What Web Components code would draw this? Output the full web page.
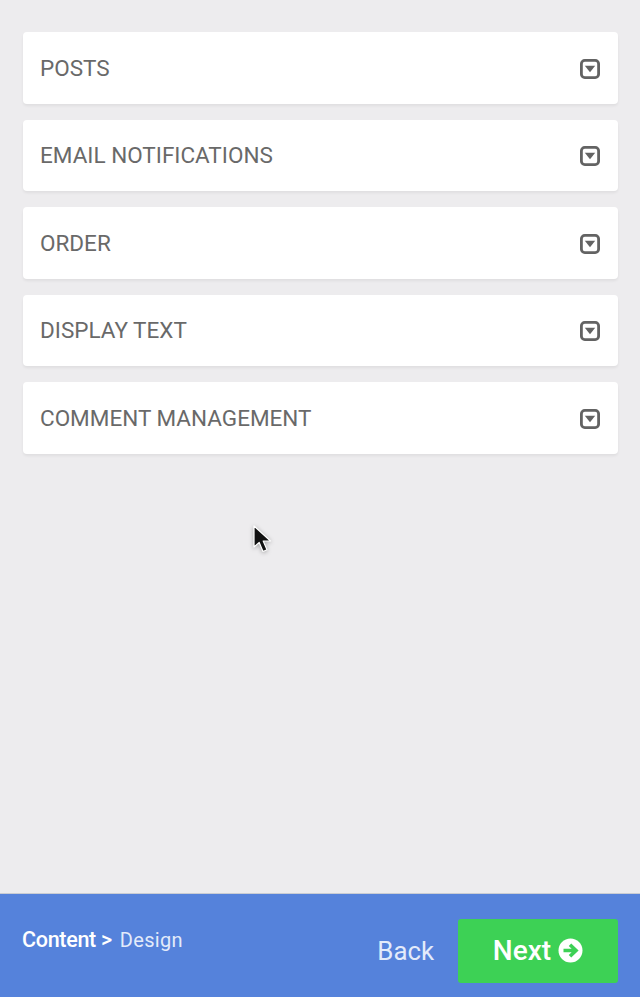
<!DOCTYPE html>
<html>
<head>
<meta charset="utf-8">
<style>
  html, body { margin: 0; height: 100%; }
  body { font-family: Roboto, "Liberation Sans", sans-serif; background: #edecee; }
</style>
</head>
<body>
<settings-screen>
  <accordion-card>POSTS</accordion-card>
  <accordion-card>EMAIL NOTIFICATIONS</accordion-card>
  <accordion-card>ORDER</accordion-card>
  <accordion-card>DISPLAY TEXT</accordion-card>
  <accordion-card>COMMENT MANAGEMENT</accordion-card>
  <wizard-footer slot="footer"></wizard-footer>
</settings-screen>

<script>
class SettingsScreen extends HTMLElement {
  constructor() {
    super();
    this.attachShadow({ mode: 'open' });
    this.shadowRoot.innerHTML = `
      <style>
        :host {
          display: flex;
          flex-direction: column;
          position: relative;
          width: 640px;
          height: 997px;
          overflow: hidden;
          background: #edecee;
        }
        .list {
          flex: 1;
          display: flex;
          flex-direction: column;
          gap: 16px;
          padding: 32px 22px 0 23px;
        }
        .cursor {
          position: absolute;
          left: 253px;
          top: 525px;
          filter: drop-shadow(0 1px 2px rgba(0,0,0,0.3));
        }
      </style>
      <div class="list"><slot></slot></div>
      <slot name="footer"></slot>
      <svg class="cursor" width="21" height="31" viewBox="0 0 21 31">
        <path d="M1 1 L1 22 L6.2 17.4 L10 26.5 L14 24.8 L10.2 16 L17.5 16 Z" fill="#111" stroke="#fff" stroke-width="1.2" stroke-linejoin="round"/>
      </svg>
    `;
  }
}

class AccordionCard extends HTMLElement {
  constructor() {
    super();
    this.attachShadow({ mode: 'open' });
    this.shadowRoot.innerHTML = `
      <style>
        :host {
          display: flex;
          align-items: center;
          justify-content: space-between;
          box-sizing: border-box;
          height: 71.5px;
          padding: 0 18px 0 17px;
          background: #fff;
          border-radius: 4px;
          box-shadow: 0 2px 3px rgba(0,0,0,0.06);
          color: #696969;
          font-size: 22.5px;
          line-height: 24px;
        }
        svg { display: block; position: relative; top: 1px; }
      </style>
      <span><slot></slot></span>
      <svg width="20" height="20" viewBox="0 0 20 20">
        <rect x="1.4" y="1.4" width="17.2" height="17.2" rx="3.4" fill="none" stroke="#636363" stroke-width="2.8"/>
        <path d="M4.8 6.8 H15.2 L10 13.2 Z" fill="#636363"/>
      </svg>
    `;
  }
}

class WizardFooter extends HTMLElement {
  constructor() {
    super();
    this.attachShadow({ mode: 'open' });
    this.shadowRoot.innerHTML = `
      <style>
        :host {
          display: flex;
          align-items: center;
          justify-content: space-between;
          box-sizing: border-box;
          height: 104px;
          padding: 0 22px 0 22px;
          background: #5582db;
          border-top: 1px solid #c9ccd3;
          color: #fff;
        }
        .crumbs {
          font-size: 20px;
          position: relative;
          top: -6px;
          display: flex;
          align-items: baseline;
          gap: 8px;
        }
        .crumbs b { font-size: 21.5px; font-weight: 500; letter-spacing: -0.3px; }
        .crumbs span { color: #e3ebfa; letter-spacing: 0.3px; }
        .actions { display: flex; align-items: center; gap: 24px; margin-top: 10px; }
        .back { font-size: 25.8px; color: #e3ebfa; background: none; border: 0; padding: 0; font-family: inherit; }
        .next {
          display: flex;
          align-items: center;
          justify-content: center;
          gap: 7px;
          width: 160px;
          height: 64px;
          border: 0;
          border-radius: 3px;
          background: #3dd155;
          color: #fff;
          font-family: inherit;
          font-size: 28px;
          font-weight: 500;
          padding: 0;
        }
      </style>
      <div class="crumbs"><b>Content &gt;</b><span>Design</span></div>
      <div class="actions">
        <button class="back">Back</button>
        <button class="next">Next
          <svg width="25" height="25" viewBox="0 0 25 25">
            <circle cx="12.5" cy="12.5" r="12" fill="#fff"/>
            <path d="M5.5 12.5 H17 M12 6.8 L18 12.5 L12 18.2" fill="none" stroke="#3dd155" stroke-width="3.6"/>
          </svg>
        </button>
      </div>
    `;
  }
}

customElements.define('settings-screen', SettingsScreen);
customElements.define('accordion-card', AccordionCard);
customElements.define('wizard-footer', WizardFooter);
</script>
</body>
</html>
